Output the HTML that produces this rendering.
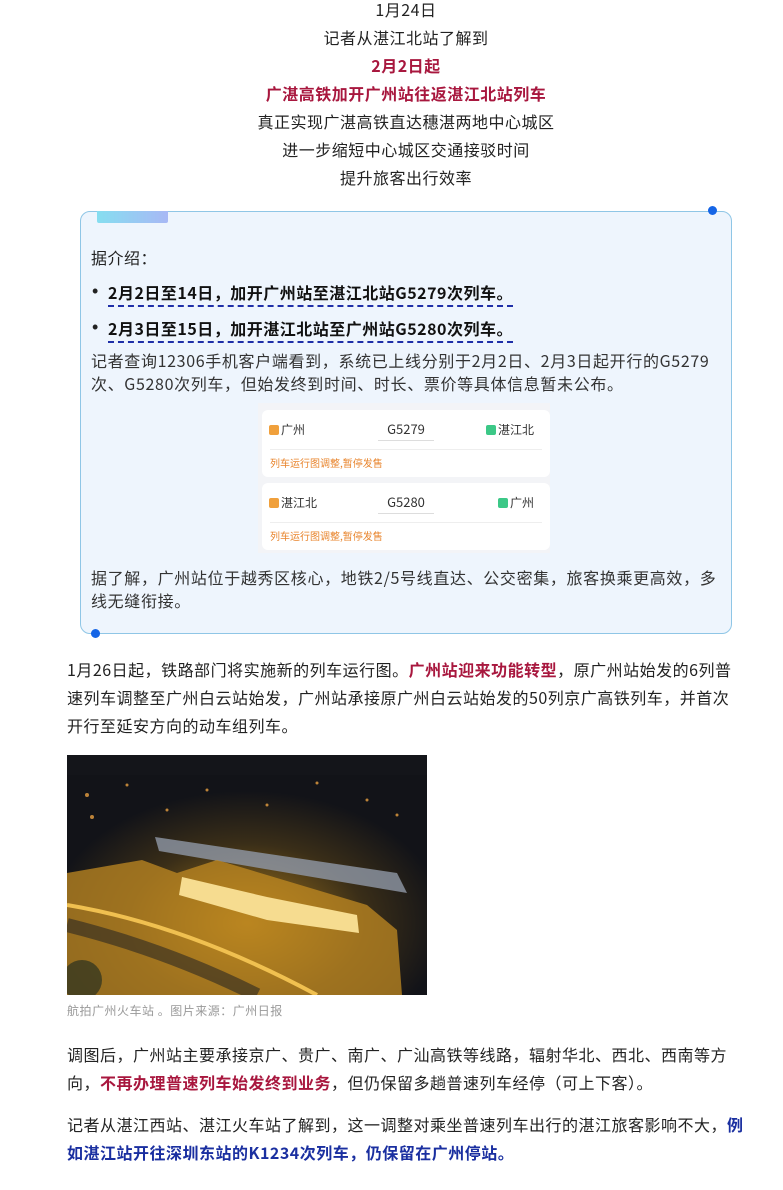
<!DOCTYPE html>
<html><head><meta charset="utf-8"><style>
*{margin:0;padding:0;box-sizing:border-box}
body{width:783px;height:1190px;background:#fff;font-family:"Noto Sans CJK SC","Liberation Sans",sans-serif;color:#222;font-size:16px;position:relative;overflow:hidden}
.a{position:absolute;white-space:nowrap}
.c{left:67px;width:678px;text-align:center;line-height:28px;letter-spacing:0.5px}
.red{color:#a8173e;font-weight:bold}
.blue{color:#1a2fa0;font-weight:bold}
.box{position:absolute;left:80px;top:211px;width:652px;height:423px;border:1px solid #8fc6e6;border-radius:10px;background:#eef5fd}
.tab{position:absolute;left:97px;top:211px;width:71px;height:12px;background:linear-gradient(90deg,#86def0,#a8b8f5);border-radius:0 0 2px 2px}
.dot{position:absolute;width:9px;height:9px;border-radius:50%;background:#1565e6}
.ul{border-bottom:2px dashed #1f2fa8;padding-bottom:1px;font-weight:bold;color:#111;letter-spacing:0.5px}
.card{position:absolute;left:262px;width:288px;background:#fff;border-radius:6px;font-size:12px;color:#333}
.ic{display:inline-block;width:10px;height:10px;border-radius:2px;vertical-align:-1px;margin-right:2px}
.or{color:#e8842c;font-size:10px}
.bul{font-family:"Liberation Sans",sans-serif;font-size:18px}
p.t{position:absolute;left:67px;width:700px;line-height:28px;white-space:nowrap;letter-spacing:0.5px}
</style></head><body>
<div class="a c" style="top:-5px">1月24日</div>
<div class="a c" style="top:23px">记者从湛江北站了解到</div>
<div class="a c red" style="top:51px">2月2日起</div>
<div class="a c red" style="top:79px">广湛高铁加开广州站往返湛江北站列车</div>
<div class="a c" style="top:107px">真正实现广湛高铁直达穗湛两地中心城区</div>
<div class="a c" style="top:135px">进一步缩短中心城区交通接驳时间</div>
<div class="a c" style="top:163px">提升旅客出行效率</div>

<div class="box"></div>
<div class="tab"></div>
<div class="dot" style="left:708px;top:206px"></div>
<div class="dot" style="left:91px;top:629px"></div>
<div class="a" style="left:91px;top:245px;line-height:24px;letter-spacing:0.5px">据介绍：</div>
<div class="a bul" style="left:92px;top:279px;line-height:24px">•</div>
<div class="a" style="left:108px;top:280px;line-height:24px"><span class="ul">2月2日至14日，加开广州站至湛江北站G5279次列车。</span></div>
<div class="a bul" style="left:92px;top:315px;line-height:24px">•</div>
<div class="a" style="left:108px;top:316px;line-height:24px"><span class="ul">2月3日至15日，加开湛江北站至广州站G5280次列车。</span></div>
<div class="a" style="left:91px;top:349px;line-height:23px;color:#333;letter-spacing:0.65px">记者查询12306手机客户端看到，系统已上线分别于2月2日、2月3日起开行的G5279<br>次、G5280次列车，但始发终到时间、时长、票价等具体信息暂未公布。</div>
<div style="position:absolute;left:258px;top:403px;width:292px;height:150px;background:#f3f4f7"></div>
<div class="card" style="top:410px;height:67px">
 <div class="a" style="left:7px;top:11px"><span class="ic" style="background:#f0a03c"></span>广州</div>
 <div class="a" style="left:116px;top:9px;font-size:13px;width:56px;border-bottom:1px solid #ddd;padding-bottom:2px;text-align:center">G5279</div>
 <div class="a" style="left:224px;top:11px"><span class="ic" style="background:#3cc887"></span>湛江北</div>
 <div style="position:absolute;left:8px;right:8px;top:39px;border-top:1px solid #eee"></div>
 <div class="a or" style="left:8px;top:45px">列车运行图调整,暂停发售</div>
</div>
<div class="card" style="top:483px;height:67px">
 <div class="a" style="left:7px;top:11px"><span class="ic" style="background:#f0a03c"></span>湛江北</div>
 <div class="a" style="left:116px;top:9px;font-size:13px;width:56px;border-bottom:1px solid #ddd;padding-bottom:2px;text-align:center">G5280</div>
 <div class="a" style="left:236px;top:11px"><span class="ic" style="background:#3cc887"></span>广州</div>
 <div style="position:absolute;left:8px;right:8px;top:39px;border-top:1px solid #eee"></div>
 <div class="a or" style="left:8px;top:45px">列车运行图调整,暂停发售</div>
</div>
<div class="a" style="left:91px;top:566px;line-height:23px;color:#333;letter-spacing:0.65px">据了解，广州站位于越秀区核心，地铁2/5号线直达、公交密集，旅客换乘更高效，多<br>线无缝衔接。</div>

<p class="t" style="top:655px">1月26日起，铁路部门将实施新的列车运行图。<span class="red">广州站迎来功能转型</span>，原广州站始发的6列普<br>速列车调整至广州白云站始发，广州站承接原广州白云站始发的50列京广高铁列车，并首次<br>开行至延安方向的动车组列车。</p>

<svg style="position:absolute;left:67px;top:755px" width="360" height="240" viewBox="0 0 360 240">
<defs><radialGradient id="g" cx="0.5" cy="0.7" r="0.55"><stop offset="0" stop-color="#a87a1c"/><stop offset="0.6" stop-color="#3a2e18"/><stop offset="1" stop-color="#121318"/></radialGradient></defs>
<rect width="360" height="240" fill="url(#g)"/>
<rect width="360" height="20" fill="#14151a"/>
<g fill="#e8a040" opacity="0.8"><circle cx="20" cy="40" r="2"/><circle cx="60" cy="30" r="1.5"/><circle cx="140" cy="35" r="1.5"/><circle cx="250" cy="28" r="1.5"/><circle cx="300" cy="45" r="1.5"/><circle cx="25" cy="62" r="2"/><circle cx="200" cy="50" r="1.5"/><circle cx="100" cy="55" r="1.5"/><circle cx="330" cy="60" r="1.5"/></g>
<polygon points="88,82 330,118 340,138 92,96" fill="#9098a8" opacity="0.8"/>
<polygon points="0,118 75,105 110,118 150,105 300,150 330,175 335,240 0,240" fill="#c08a22" opacity="0.75"/>
<polygon points="115,122 200,142 290,160 292,178 200,165 112,140" fill="#f6dc90"/>
<path d="M0,150 Q120,170 250,240" stroke="#f0c050" stroke-width="4" fill="none"/>
<path d="M0,170 Q100,195 190,240" stroke="#202020" stroke-width="14" fill="none" opacity="0.55"/>
<circle cx="15" cy="225" r="20" fill="#2a3020" opacity="0.7"/>
</svg>
<div class="a" style="left:67px;top:1002px;font-size:12px;color:#999;letter-spacing:0.5px">航拍广州火车站 。图片来源：广州日报</div>
<p class="t" style="top:1040px">调图后，广州站主要承接京广、贵广、南广、广汕高铁等线路，辐射华北、西北、西南等方<br>向，<span class="red">不再办理普速列车始发终到业务</span>，但仍保留多趟普速列车经停（可上下客）。</p>
<p class="t" style="top:1110px">记者从湛江西站、湛江火车站了解到，这一调整对乘坐普速列车出行的湛江旅客影响不大，<span class="blue">例<br>如湛江站开往深圳东站的K1234次列车，仍保留在广州停站。</span></p>
</body></html>
